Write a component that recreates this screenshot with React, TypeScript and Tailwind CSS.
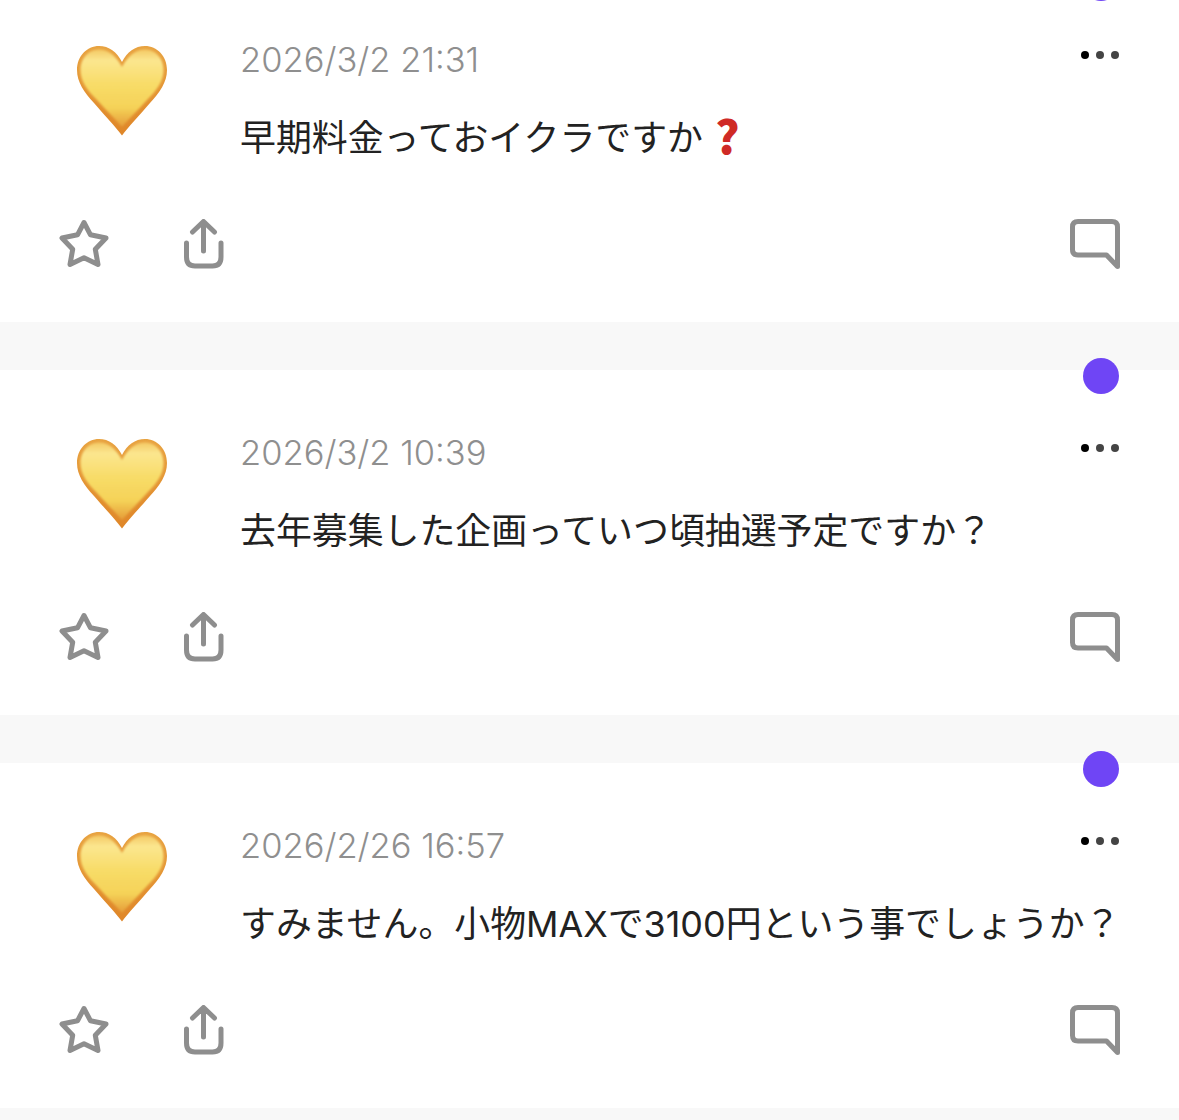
const font = '[font-family:Inter,"Noto_Sans_CJK_JP",sans-serif]';

const posts = [
    { id: 1, time: "2026/3/2 21:31", body: "早期料金っておイクラですか", mark: true },
    { id: 2, time: "2026/3/2 10:39", body: "去年募集した企画っていつ頃抽選予定ですか？", mark: false },
    { id: 3, time: "2026/2/26 16:57", body: "すみません。小物MAXで3100円という事でしょうか？", mark: false },
];

const Heart = ({ id }: { id: number }) => (
    <svg width="90" height="91" viewBox="0 0 90 91" className="shrink-0">
        <defs>
            <linearGradient id={`edge-${id}`} x1="0" y1="0" x2="0" y2="1">
                <stop offset="0%" stopColor="#e8a341" />
                <stop offset="100%" stopColor="#df8628" />
            </linearGradient>
            <linearGradient id={`fill-${id}`} x1="0" y1="0" x2="0" y2="1">
                <stop offset="0%" stopColor="#f4c964" />
                <stop offset="14%" stopColor="#fbe68f" />
                <stop offset="45%" stopColor="#f8dc68" />
                <stop offset="75%" stopColor="#f5d258" />
                <stop offset="100%" stopColor="#e59c38" />
            </linearGradient>
            <filter id={`soft-${id}`} x="-10%" y="-10%" width="120%" height="120%">
                <feGaussianBlur stdDeviation="1.1" />
            </filter>
        </defs>
        <path
            d="M45 90.5 C38 81 29 72 17 58 C7 47 0 37 0 25 C0 11 10 1 22 1 C32 1 40 7 45 17 C50 7 58 1 68 1 C80 1 90 11 90 25 C90 37 83 47 73 58 C61 72 52 81 45 90.5 Z"
            fill={`url(#edge-${id})`}
        />
        <path
            d="M45 82 C38 74 31 67 20 55 C10 45 3.5 36 3.5 25 C3.5 13 12 4.5 22 4.5 C32 4.5 39 11 45 22 C51 11 58 4.5 68 4.5 C78 4.5 86.5 13 86.5 25 C86.5 36 80 45 70 55 C59 67 52 74 45 82 Z"
            fill={`url(#fill-${id})`}
            filter={`url(#soft-${id})`}
        />
    </svg>
);

const Star = () => (
    <svg width="50" height="50" viewBox="0 0 50 50" fill="none" stroke="#8e8e8e" strokeWidth="5" strokeLinejoin="round">
        <path d="M25 3.5 L31.5 15.8 L47 19 L36.3 30.3 L39 45.5 L25 38.8 L11 45.5 L13.7 30.3 L3 19 L18.5 15.8 Z" />
    </svg>
);

const Share = () => (
    <svg width="40" height="50" viewBox="0 0 40 50" fill="none" stroke="#8e8e8e" strokeWidth="5" strokeLinecap="round" strokeLinejoin="round">
        <path d="M19.5 32 V3 M8.5 13 L19.5 2.5 L30.5 13" />
        <path d="M2.5 24 V38 C2.5 44 5.5 47 11 47 H28.5 C34 47 37 44 37 38 V24" />
    </svg>
);

const Comment = () => (
    <svg width="50" height="50" viewBox="0 0 50 50" fill="none" stroke="#8e8e8e" strokeWidth="5" strokeLinecap="round" strokeLinejoin="round">
        <path d="M8 2.5 H42 C45.5 2.5 47.5 4.5 47.5 8 V47.5 L36.5 36 H8 C4.5 36 2.5 34 2.5 30.5 V8 C2.5 4.5 4.5 2.5 8 2.5 Z" />
    </svg>
);

const PostCard = ({ post }: { post: (typeof posts)[number] }) => (
    <div className="relative h-[345px] bg-white pt-[63px] pr-[60px] pl-[59px] flex flex-col">
        <div className="absolute -top-[12px] right-[60px] w-[36px] h-[36px] rounded-full bg-[#6f45f5]"></div>
        <div className="flex flex-row">
            <div className="pl-[18px] pt-[5px] mr-[73px]">
                <Heart id={post.id} />
            </div>
            <div className="flex-1 min-w-0">
                <div className="flex flex-row items-center justify-between h-[40px]">
                    <span className="text-[34.5px] font-light text-[#8f8f8f]">{post.time}</span>
                    <div className="flex flex-row gap-[7px] -mt-[10px]">
                        <span className="w-[8px] h-[8px] rounded-full bg-black"></span>
                        <span className="w-[8px] h-[8px] rounded-full bg-[#444444]"></span>
                        <span className="w-[8px] h-[8px] rounded-full bg-[#444444]"></span>
                    </div>
                </div>
                <p className="mt-[33px] h-[50px] leading-[50px] text-[35.9px] text-[#222222] whitespace-nowrap">
                    {post.body}
                    {post.mark && (
                        <span className='[font-family:"Noto_Sans_CJK_JP",sans-serif] font-black text-[46px] leading-[0] align-[-3px] text-[#cf2a26] ml-[12px]'>
                            ?
                        </span>
                    )}
                </p>
            </div>
        </div>
        <div className="flex flex-row items-center mt-[56px]">
            <Star />
            <div className="ml-[75px]">
                <Share />
            </div>
            <div className="ml-auto mr-[-1px]">
                <Comment />
            </div>
        </div>
    </div>
);

export default function App() {
    return (
        <div className={`h-[1120px] overflow-hidden bg-[#f8f8f8] ${font}`}>
            <div className="-mt-[23px] flex flex-col gap-[48px]">
                {posts.map((post) => (
                    <PostCard key={post.id} post={post} />
                ))}
            </div>
        </div>
    );
}
